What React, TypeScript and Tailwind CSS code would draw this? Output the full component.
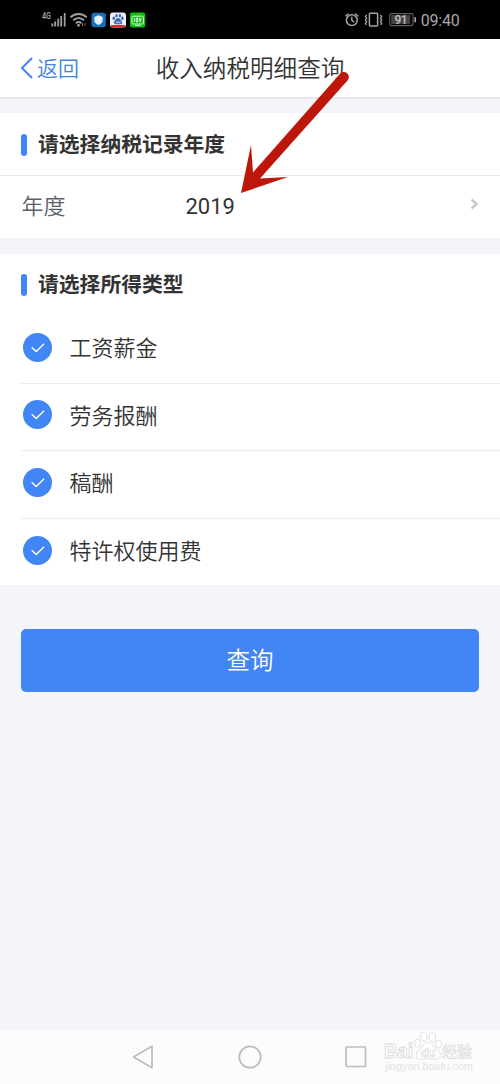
import React from "react";

const incomeTypes = ["工资薪金", "劳务报酬", "稿酬", "特许权使用费"];

function StatusBar() {
  return (
    <div className="flex h-[39px] shrink-0 items-center justify-between bg-black pr-[40px] pl-[41px] text-[#a8a8a8]">
      <svg width="106" height="39" viewBox="41 0 106 39" fill="none">
        <text x="42" y="18.8" fontSize="9" fontWeight="500" fill="#a8a8a8" fontFamily="Roboto, sans-serif" textLength="9" lengthAdjust="spacingAndGlyphs">4G</text>
        <path d="M52.3 26.5v-3M55.2 26.5v-5M58.2 26.5v-8M61.2 26.5v-10.5M64.7 26.5V13" stroke="#a0a0a0" strokeWidth="1.8" />
        <path d="M70.5 17.2c4.8-4.3 11.4-4.3 16.2 0M73.2 20.3c3.3-2.9 7.5-2.9 10.8 0M75.9 23.2c1.7-1.4 3.7-1.4 5.4 0" stroke="#a0a0a0" strokeWidth="1.9" />
        <circle cx="78.5" cy="25.3" r="1.4" fill="#a0a0a0" />
        <path d="M82.5 26v-3M85 23v3" stroke="#777" strokeWidth="1" />
        <rect x="91.5" y="12.8" width="14.2" height="14.5" rx="2.5" fill="#1474bd" />
        <path d="M98.5 15.3l4.2 1.6v3c0 2.5-1.7 4-4.2 5.2-2.5-1.2-4.2-2.7-4.2-5.2v-3z" fill="#e4f1f8" />
        <rect x="110" y="12.5" width="16" height="15" rx="3" fill="#eef0f6" />
        <path d="M110.5 25h15c-.4 1.6-1.2 2.5-3 2.5h-9c-1.8 0-2.6-.9-3-2.5z" fill="#d5302b" />
        <g fill="#3565b4">
          <ellipse cx="113.8" cy="18.2" rx="1.2" ry="1.7" />
          <ellipse cx="116.5" cy="15.7" rx="1.2" ry="1.7" />
          <ellipse cx="119.9" cy="15.7" rx="1.2" ry="1.7" />
          <ellipse cx="122.4" cy="18.2" rx="1.2" ry="1.7" />
          <path d="M118.1 18c-1.5 0-2 1.4-3 2.3-1.7 1.5-1.2 4 .7 4h4.6c2 0 2.4-2.5.7-4-1-.9-1.5-2.3-3-2.3z" />
        </g>
        <path d="M116.5 21.3v1.6h1.3v-1.6M119 21.3v1.6h1.3v-1.6" stroke="#fff" strokeWidth=".6" />
        <rect x="130" y="12.5" width="15.3" height="15" rx="2" fill="#0fbf12" />
        <rect x="132" y="16.2" width="11.4" height="7.8" rx="1" stroke="#d7f7d5" strokeWidth="1" />
        <path d="M134.4 18v4M136.3 18v4h1.4v-4zM139.2 18l1 4 1-4M135 25.4h5.5" stroke="#e9fbe8" strokeWidth=".9" />
      </svg>
      <svg width="116" height="39" viewBox="344 0 116 39" fill="none" stroke="#a5a5a5">
        <circle cx="351.8" cy="20.2" r="5.4" strokeWidth="1.5" />
        <path d="M351.8 16.8v3.6l2.5 1.7M345.5 16.2l3-2.8M358.1 16.2l-3-2.8" strokeWidth="1.4" />
        <rect x="369.4" y="13.3" width="8.2" height="12.6" rx=".8" strokeWidth="1.5" />
        <path d="M366.7 15l-1.3 1.7 1.3 1.7-1.3 1.7 1.3 1.7-1.3 1.7 1 1.3M380.4 15l1.3 1.7-1.3 1.7 1.3 1.7-1.3 1.7 1.3 1.7-1 1.3" strokeWidth="1.3" />
        <rect x="389.7" y="13.6" width="23.3" height="12" rx="2" stroke="#606060" strokeWidth="1.1" />
        <rect x="391.2" y="15.1" width="19" height="9" fill="#444" stroke="none" />
        <path d="M415.2 17.2v5" strokeWidth="1.7" />
        <text x="394.6" y="24" fontSize="12" fontWeight="500" fill="#c0c0c0" stroke="none" fontFamily="Roboto, sans-serif" textLength="13">91</text>
        <text x="420.8" y="25.8" fontSize="16" fill="#a8a8a8" stroke="none" fontFamily="Roboto, sans-serif" textLength="39">09:40</text>
      </svg>
    </div>
  );
}

function SectionTitle({ children }: { children: React.ReactNode }) {
  return (
    <h2 className="flex h-[61px] items-center pl-[21px] text-[20.8px] leading-[30px] font-bold text-[#333]">
      <span className="mr-[11px] h-[22px] w-[6px] rounded-[3px] bg-[#4285f4]" />
      <span className="pt-px">{children}</span>
    </h2>
  );
}

function CheckMark() {
  return (
    <span className="mb-[4px] flex size-[29px] items-center justify-center rounded-full bg-[#4285f4]">
      <svg width="29" height="29" viewBox="0 0 29 29" fill="none">
        <path d="M8.7 14.3l4.5 4.2 7.9-7.7" stroke="#fff" strokeWidth="1.4" />
      </svg>
    </span>
  );
}

function Watermark() {
  return (
    <svg className="absolute right-[25px] bottom-[8px]" width="92" height="46" viewBox="0 0 92 46" fill="none" fontFamily="'Liberation Sans', 'Noto Sans CJK SC', sans-serif">
      <g stroke="#d8d8d8" strokeWidth=".8" fill="#fff">
        <text x="1" y="28" fontSize="20" fontWeight="700" textLength="29" lengthAdjust="spacingAndGlyphs">Bai</text>
        <ellipse cx="34.5" cy="13" rx="3" ry="4" />
        <ellipse cx="41" cy="6.5" rx="3.2" ry="4.5" />
        <ellipse cx="49.5" cy="7" rx="3.2" ry="4.5" />
        <ellipse cx="55.5" cy="14" rx="3" ry="4" />
        <path d="M45 12.5c-4 0-5 4-8 6.5-6 4-4.5 10.5 1 10.3 5-.8 9-.8 14 0 6.500.2 7.500-6.300 1-10.300-3-2.500-4-6.500-8-6.500z" />
        <text x="37.500" y="27" fontSize="13" fontWeight="700" textLength="15" strokeWidth=".6">du</text>
        <text x="59" y="27" fontSize="15" fontWeight="500" strokeWidth=".6">经验</text>
      </g>
      <text x="2" y="40" fontSize="11" fill="#e3e3e3" textLength="88">jingyan.baidu.com</text>
    </svg>
  );
}

export default function App() {
  return (
    <div className="relative flex h-[1084px] w-[500px] flex-col overflow-hidden bg-[#f3f5fa] font-[Roboto,'Noto_Sans_CJK_SC',sans-serif] text-[#333]">
      <StatusBar />
      <header className="grid h-[60px] shrink-0 grid-cols-[1fr_auto_1fr] items-center border-b-2 border-[#e5e7eb] bg-white">
        <button className="flex items-center pl-[20px] text-[21px] leading-[30px] font-[350] text-[#4284dc]">
          <svg className="mr-[4px]" width="13" height="22" viewBox="0 0 13 22" fill="none">
            <path d="M12 1L2 11l10 10" stroke="#4285f4" strokeWidth="2.1" />
          </svg>
          <span className="pt-px">返回</span>
        </button>
        <h1 className="pt-[2px] text-[23.6px] leading-[34px] font-[350]">收入纳税明细查询</h1>
      </header>

      <section className="mt-[14px] h-[125px] shrink-0 bg-white">
        <div className="pt-px">
          <SectionTitle>请选择纳税记录年度</SectionTitle>
        </div>
        <div className="flex h-[63px] items-center border-t border-[#e8e9eb] pr-[21px] pl-[21.5px] text-[22px] leading-[32px]">
          <span className="w-[164px] font-[350] text-[#5b5f6b]">年度</span>
          <span className="flex-1">2019</span>
          <svg className="mb-[6px]" width="9" height="12" viewBox="0 0 9 12" fill="none">
            <path d="M1.5 1.5L6.5 6l-5 4.5" stroke="#c8c9cc" strokeWidth="2.4" />
          </svg>
        </div>
      </section>

      <section className="mt-[16px] h-[331px] shrink-0 bg-white">
        <SectionTitle>请选择所得类型</SectionTitle>
        <ul className="mt-px divide-y divide-[#ececee] pl-[21px]">
          {incomeTypes.map((name) => (
            <li key={name} className="flex h-[67.5px] items-center gap-[18px] pl-[1.5px] text-[22px] leading-[32px] font-[350]">
              <CheckMark />
              <span>{name}</span>
            </li>
          ))}
        </ul>
      </section>

      <button className="mx-[21px] mt-[44px] h-[63px] shrink-0 rounded-[5px] bg-[#4285f4] text-[23.5px] leading-[34px] font-[350] text-white">
        查询
      </button>

      <nav className="relative mt-auto h-[54px] shrink-0 bg-[#fcfcfc]">
        <div className="flex h-full items-center justify-between pr-[133px] pl-[132px]">
          <svg width="22" height="24" viewBox="0 0 22 24" fill="none" stroke="#bdbdbd" strokeWidth="1.7" strokeLinejoin="round">
            <path d="M1.5 12L20 1.3v21.4z" />
          </svg>
          <svg width="24" height="24" viewBox="0 0 24 24" fill="none" stroke="#bdbdbd" strokeWidth="1.7">
            <circle cx="12" cy="12" r="10.7" />
          </svg>
          <svg width="22" height="22" viewBox="0 0 22 22" fill="none" stroke="#bdbdbd" strokeWidth="1.7">
            <rect x="1" y="1" width="19.5" height="19.5" rx="1" />
          </svg>
        </div>
        <Watermark />
      </nav>

      <svg className="pointer-events-none absolute top-[65px] left-[235px]" width="120" height="135" viewBox="235 65 120 135">
        <path d="M241 193l10-48 2 27.5 87-98.8a5 5 0 0 1 7.5 6.8L260 178.5l28-1.5z" fill="#bd170b" />
      </svg>
    </div>
  );
}
